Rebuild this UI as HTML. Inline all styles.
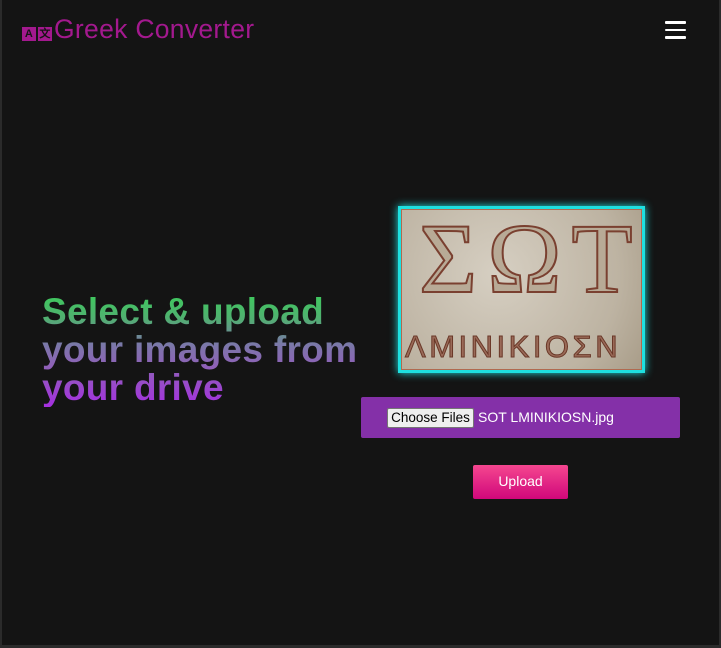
<!DOCTYPE html>
<html><head><meta charset="utf-8"><style>
html,body{margin:0;padding:0}
body{width:721px;height:648px;background:#2b2b2b;position:relative;overflow:hidden;font-family:"Liberation Sans",sans-serif}
.main{position:absolute;left:2px;top:0;width:717px;height:645px;background:#141414}
.logo{position:absolute;left:20px;top:14px;color:#a3198e;font-size:26.5px;letter-spacing:0.3px}
.ic{display:inline-block;width:14px;height:14px;background:#a3198e;color:#141414;font-size:11px;font-weight:bold;text-align:center;line-height:14px;vertical-align:1px;margin-right:2px}
.ham{position:absolute;left:663px;top:21px;width:21px}
.ham div{height:2.5px;background:#fff;margin-bottom:5px;border-radius:1px}
.h{position:absolute;left:40px;top:293px;font-size:37px;font-weight:bold;line-height:38px;background:linear-gradient(#3dcb5c 0%,#50b070 22%,#7a78a8 45%,#8f60b8 65%,#a52fe0 100%);-webkit-background-clip:text;background-clip:text;color:transparent;letter-spacing:0.3px}
.img{position:absolute;left:396px;top:206px;width:241px;height:161px;border:3px solid #1ee0e0;box-shadow:0 0 8px #1ee0e0;background:radial-gradient(circle at 40% 40%,#d6cfc2,#bdb3a2 70%,#a89c88);outline:1px solid #b06a50;outline-offset:-4px;overflow:hidden}
.big{position:absolute;left:18px;top:-8px;font-family:"Liberation Serif",serif;font-size:100px;color:#b8aa96;-webkit-text-stroke:2px #7a4030;letter-spacing:10px}
.small{position:absolute;left:4px;top:120px;font-family:"Liberation Sans",sans-serif;font-size:31px;color:#9a6a58;-webkit-text-stroke:1px #6a3828;letter-spacing:3.5px}
.file{position:absolute;left:359px;top:397px;width:319px;height:41px;background:#8430a8;border-radius:2px}
.btn{position:absolute;left:26px;top:11px;width:85px;height:18px;background:#efefef;border:1px solid #767676;border-radius:2px;font-size:13.5px;color:#000;text-align:center;line-height:18px}
.fn{position:absolute;left:117px;top:12px;color:#fff;font-size:14px}
.up{position:absolute;left:471px;top:465px;width:95px;height:34px;background:linear-gradient(#f5478f,#d0077b);border-radius:2px;color:#fff;font-size:14px;text-align:center;line-height:33px}
</style></head><body>
<div class="main">
<div class="logo"><span class="ic">A</span><span class="ic">文</span>Greek Converter</div>
<div class="ham"><div></div><div></div><div></div></div>
<div class="h">Select &amp; upload<br>your images from<br>your drive</div>
<div class="img"><div class="big">ΣΩΤ</div><div class="small">ΛΜΙΝΙΚΙΟΣΝ</div></div>
<div class="file"><div class="btn">Choose Files</div><div class="fn">SOT LMINIKIOSN.jpg</div></div>
<div class="up">Upload</div>
</div>
</body></html>
